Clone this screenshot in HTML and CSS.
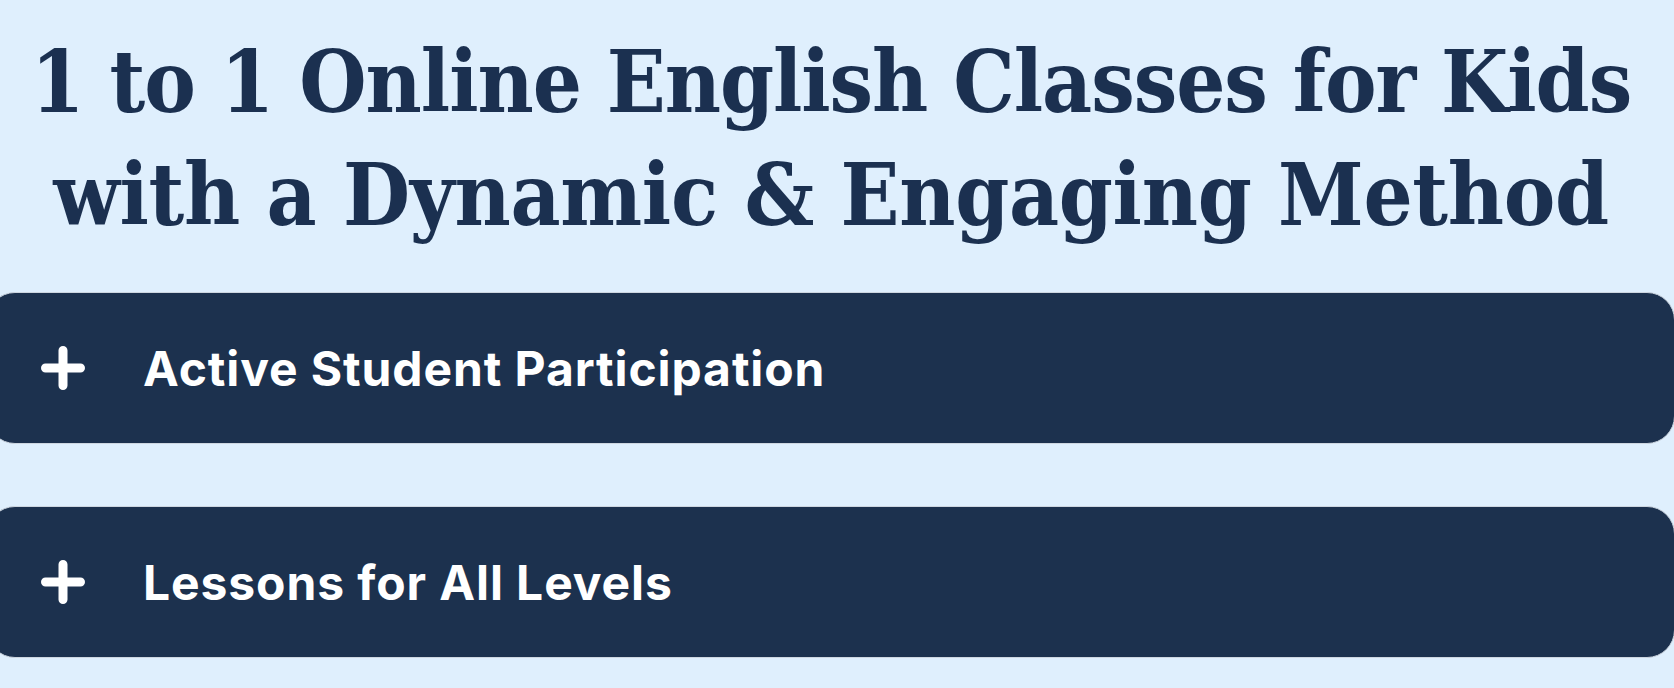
FILE: index.html
```html
<!DOCTYPE html>
<html lang="en">

<head>
    <meta charset="UTF-8">
    <meta name="viewport" content="width=device-width, initial-scale=1.0">
    <title>Online English Classes for Kids</title>
    <link rel="stylesheet" href="styles.css">
</head>

<body>
    <main class="page">
        <h1 class="hero-title">1 to 1 Online English Classes for Kids<br><span class="hero-title-end">with a Dynamic &amp; Engaging Method</span></h1>

        <div class="accordion">
            <button type="button" class="accordion-item">
                <svg class="plus-icon" viewBox="0 0 44 44" aria-hidden="true">
                    <path d="M22 4.5v35M4.5 22h35" />
                </svg>
                <span class="accordion-label">Active Student Participation</span>
            </button>

            <button type="button" class="accordion-item">
                <svg class="plus-icon" viewBox="0 0 44 44" aria-hidden="true">
                    <path d="M22 4.5v35M4.5 22h35" />
                </svg>
                <span class="accordion-label">Lessons for All Levels</span>
            </button>
        </div>
    </main>
</body>

</html>
```

FILE: styles.css
```css
body {
    margin: 0;
    background-color: #dfeffd;
    overflow: hidden;
}

.page {
    margin: 0 -1px 0 -13px;
}

.hero-title {
    margin: 25px 0 0;
    font-family: "DejaVu Serif", serif;
    font-stretch: condensed;
    font-weight: bold;
    font-size: 86px;
    line-height: 113px;
    letter-spacing: -1.05px;
    text-align: center;
    color: #1b3050;
}

.hero-title-end {
    letter-spacing: -0.3px;
}

.accordion {
    display: flex;
    flex-direction: column;
    gap: 62px;
    margin-top: 41px;
}

.accordion-item {
    display: flex;
    align-items: center;
    gap: 58px;
    height: 152px;
    padding: 0 0 0 53px;
    background: #1c314e;
    border: 1px solid #cdd6e0;
    border-radius: 28px;
    color: white;
    cursor: pointer;
    text-align: left;
}

.plus-icon {
    width: 44px;
    height: 44px;
    flex-shrink: 0;
}

.plus-icon path {
    stroke: white;
    stroke-width: 9;
    stroke-linecap: round;
    fill: none;
}

.accordion-label {
    font-family: Inter, sans-serif;
    font-weight: bold;
    font-size: 48px;
    letter-spacing: 0.9px;
}
```
